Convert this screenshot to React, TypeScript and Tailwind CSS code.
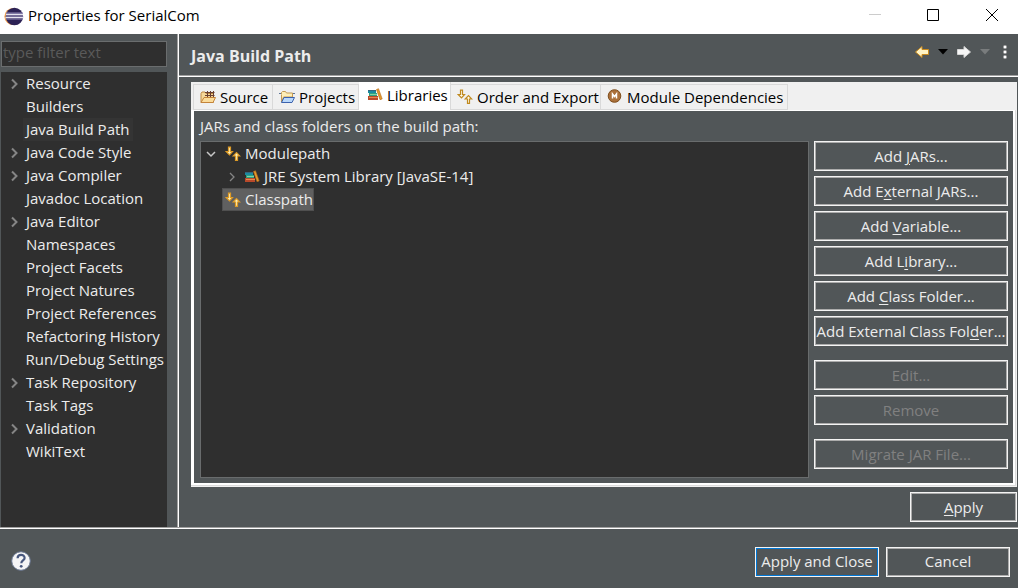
import { useState } from "react";
import type { ReactNode } from "react";
import clsx from "clsx";

interface NavItem {
  label: string;
  expandable?: boolean;
}

const NAV_ITEMS: NavItem[] = [
  { label: "Resource", expandable: true },
  { label: "Builders" },
  { label: "Java Build Path" },
  { label: "Java Code Style", expandable: true },
  { label: "Java Compiler", expandable: true },
  { label: "Javadoc Location" },
  { label: "Java Editor", expandable: true },
  { label: "Namespaces" },
  { label: "Project Facets" },
  { label: "Project Natures" },
  { label: "Project References" },
  { label: "Refactoring History" },
  { label: "Run/Debug Settings" },
  { label: "Task Repository", expandable: true },
  { label: "Task Tags" },
  { label: "Validation", expandable: true },
  { label: "WikiText" },
];

function EclipseLogo() {
  return (
    <svg width="20" height="20" viewBox="0 0 20 20" aria-hidden="true">
      <circle cx="9" cy="9.500" r="8.600" fill="#f0a050" />
      <circle cx="10.400" cy="9.500" r="8.700" fill="#2c2255" />
      <path d="M2 7.500h17M1.500 10.500h18" stroke="#e4e2ee" strokeWidth="1.300" />
      <path d="M2 6.200h17M2 9h17M2 12h17" stroke="#8f88b5" strokeWidth="1.200" />
    </svg>
  );
}

function SourceIcon() {
  return (
    <svg width="16" height="16" viewBox="0 0 16 16" aria-hidden="true">
      <path d="M1 13.500V4.500l1-1.500h3l1 1.500h7.500v9z" fill="#f6d89a" stroke="#c08a44" />
      <path d="M5 3.500h9.500M5 6.500h9.500M7.500 2v6.500M10.500 2v6.500M13.500 2v6.500" fill="none" stroke="#6b4031" />
      <path d="M1 13.500l3-5h11.500l-2.500 5z" fill="#fbdc9b" stroke="#c4843a" />
    </svg>
  );
}

function ProjectsIcon() {
  return (
    <svg width="16" height="16" viewBox="0 0 16 16" aria-hidden="true">
      <path d="M2.500 13V5.500M2.500 5V3.500L3.500 2.500h3l1 1.500h6v4h-9l-2 5" fill="#fdeeb8" stroke="#c39a55" />
      <path d="M0 4.500h2M14 4.500h2" stroke="#5c7599" />
      <path d="M2.500 13.500L5 8.500h10.500L13 13.500z" fill="#b9d8fb" stroke="#3c62ad" />
    </svg>
  );
}

function LibraryIcon() {
  return (
    <svg width="16" height="16" viewBox="0 0 16 16" aria-hidden="true">
      <path d="M1 3h8v3H1z" fill="#1b8aa0" />
      <path d="M1 3h8v1H1z" fill="#35657f" />
      <path d="M2 6h8v3H2z" fill="#2fa27f" />
      <path d="M3 7h7v1H3z" fill="#84d1a8" />
      <path d="M1 9h10v4H1z" fill="#b8492a" />
      <path d="M2 10.500h9" stroke="#e8884e" />
      <path d="M9.500 2.500l2-.8 3.700 10.200-2.200.8z" fill="#e39b2b" stroke="#b4661b" strokeWidth=".6" />
    </svg>
  );
}

function ArrowsIcon({ outline = false }: { outline?: boolean }) {
  return (
    <svg width="16" height="16" viewBox="0 0 16 16" aria-hidden="true">
      <g
        fill={outline ? "#fffbe9" : "#fff0b8"}
        stroke={outline ? "#c08a20" : "#dc9a26"}
        strokeWidth="1.200"
      >
        <path d="M3.500 1.200h2v4.300h2L4.500 8.800 1.200 5.500h2.300z" />
        <path d="M10.500 14.300h2v-4.300h2.300L11.500 6.500 8.200 10h2.300z" />
      </g>
    </svg>
  );
}

function ModuleIcon() {
  return (
    <svg width="16" height="16" viewBox="0 0 16 16" aria-hidden="true">
      <circle cx="7.500" cy="7" r="6.300" fill="#ab713b" stroke="#80501f" />
      <path d="M5.500 9.500V5l2 2.500 2-2.500v4.500" fill="none" stroke="#fff" strokeWidth="1.500" />
    </svg>
  );
}

function Chevron({ open = false, thin = false }: { open?: boolean; thin?: boolean }) {
  return (
    <svg width="12" height="12" viewBox="0 0 12 12" fill="none" aria-hidden="true">
      {open ? (
        <path d="M2 4l4 4 4-4" stroke="#c8c8c8" strokeWidth="1.500" />
      ) : (
        <path d={thin ? "M4 2l4 4-4 4" : "M4 1.500L8.500 6 4 10.500"} stroke="#858585" strokeWidth={thin ? 1.3 : 2} />
      )}
    </svg>
  );
}

function PageArrow({ forward = false }: { forward?: boolean }) {
  return (
    <svg width="16" height="16" viewBox="0 0 16 16" aria-hidden="true">
      {forward ? (
        <path d="M1.500 5.500h6.500V2.500L14.500 8 8 13.500v-3H1.500z" fill="#f6f6f6" stroke="#d5d5d5" />
      ) : (
        <path d="M14.500 5.500H8V2.500L1.500 8 8 13.500v-3h6.500z" fill="#fff3c4" stroke="#c98a1c" />
      )}
    </svg>
  );
}

function Caret({ disabled = false }: { disabled?: boolean }) {
  return (
    <svg width="10" height="6" viewBox="0 0 10 6" aria-hidden="true">
      <path d="M0 0h10L5 5.500z" fill={disabled ? "#797c7d" : "#000"} />
    </svg>
  );
}

// Label with its keyboard mnemonic, marked by "&" before the letter
function Mnemonic({ text }: { text: string }) {
  const at = text.indexOf("&");
  if (at < 0) return <>{text}</>;
  return (
    <>
      {text.slice(0, at)}
      <span className="underline underline-offset-2">{text[at + 1]}</span>
      {text.slice(at + 2)}
    </>
  );
}

function PushButton({
  text,
  disabled,
  primary,
  className,
}: {
  text: string;
  disabled?: boolean;
  primary?: boolean;
  className?: string;
}) {
  return (
    <button
      type="button"
      disabled={disabled}
      className={clsx(
        "h-[30px] border border-[#f4f4f4] outline -outline-offset-2 whitespace-nowrap",
        primary ? "outline-[#0078d7]" : "outline-[#acacac]",
        disabled ? "text-[#808080]" : "text-[#ececec]",
        className,
      )}
    >
      <Mnemonic text={text} />
    </button>
  );
}

const TABS: { label: string; icon: ReactNode; width: string }[] = [
  { label: "Source", icon: <SourceIcon />, width: "w-[80px]" },
  { label: "Projects", icon: <ProjectsIcon />, width: "w-[86px]" },
  { label: "Libraries", icon: <LibraryIcon />, width: "w-[92px]" },
  { label: "Order and Export", icon: <ArrowsIcon outline />, width: "w-[150px]" },
  { label: "Module Dependencies", icon: <ModuleIcon />, width: "w-[187px]" },
];

export default function App() {
  const [page, setPage] = useState("Java Build Path");
  const [tab, setTab] = useState("Libraries");
  const [filter, setFilter] = useState("");

  return (
    <div className="flex min-h-screen flex-col bg-[#515658] font-['Open_Sans','Noto_Sans',sans-serif] text-[15px] leading-[23px] text-[#ececec]">
      {/* Title bar */}
      <header className="flex h-[34px] items-center bg-white pl-1 text-black">
        <EclipseLogo />
        <h1 className="ml-1 pb-1">Properties for SerialCom</h1>
        <div className="ml-auto flex pb-1">
          <button type="button" aria-label="Minimize" disabled className="flex w-[58px] justify-center">
            <svg width="12" height="12" viewBox="0 0 12 12">
              <path d="M0 5.500h12" stroke="#cccccc" />
            </svg>
          </button>
          <button type="button" aria-label="Maximize" className="flex w-[58px] justify-center">
            <svg width="12" height="12" viewBox="0 0 12 12">
              <path d="M.5.500h11v11H.500z" fill="none" stroke="#000" />
            </svg>
          </button>
          <button type="button" aria-label="Close" className="flex w-[56px] justify-center pl-1">
            <svg width="12" height="12" viewBox="0 0 12 12">
              <path d="M0 0l12 12M12 0L0 12" stroke="#000" />
            </svg>
          </button>
        </div>
      </header>

      <div className="flex flex-1">
        {/* Page list */}
        <aside className="flex w-[178px] shrink-0 flex-col border-r border-[#a0a0a0] pt-[7px] pr-2.5 pl-px">
          <input
            type="text"
            aria-label="Filter"
            placeholder="type filter text"
            value={filter}
            onChange={(e) => setFilter(e.target.value)}
            className="h-[26px] w-full border border-[#6a6d6e] bg-[#2f2f2f] px-px pb-1 placeholder:text-[#5a5a5a]"
          />
          <ul className="mt-[5px] flex-1 bg-[#2f2f2f]">
            {NAV_ITEMS.filter((i) => i.label.toLowerCase().includes(filter.toLowerCase())).map((item) => (
              <li key={item.label} className="flex h-[23px] items-center">
                <span className="flex w-[22px] justify-center pl-1">{item.expandable && <Chevron />}</span>
                <button
                  type="button"
                  onClick={() => setPage(item.label)}
                  className={clsx("px-[3px] whitespace-nowrap", page === item.label && "bg-[#343434]")}
                >
                  {item.label}
                </button>
              </li>
            ))}
          </ul>
        </aside>

        <main className="flex min-w-0 flex-1 flex-col border-l border-white">
          <div className="flex h-[42px] items-center border-b border-[#a0a0a0] pr-2.5 pl-3">
            <h2 className="pt-0.5 text-base font-bold">{page}</h2>
            <div className="ml-auto flex items-center pb-1.5">
              <button type="button" aria-label="Back">
                <PageArrow />
              </button>
              <button type="button" aria-label="Back history" className="ml-2">
                <Caret />
              </button>
              <button type="button" aria-label="Forward" className="ml-2">
                <PageArrow forward />
              </button>
              <button type="button" aria-label="Forward history" disabled className="ml-2">
                <Caret disabled />
              </button>
              <button type="button" aria-label="View menu" className="ml-3">
                <svg width="6" height="16" viewBox="0 0 6 16">
                  <path d="M1 1h4v4H1zM1 6h4v4H1zM1 11h4v4H1z" fill="#3c3f40" />
                  <path d="M1.500 1.500h3v3h-3zM1.500 6.500h3v3h-3zM1.500 11.500h3v3h-3z" fill="#fff" />
                </svg>
              </button>
            </div>
          </div>
          <div className="h-px bg-white" />

          {/* Tab folder */}
          <section className="mt-[5px] mr-px ml-3 flex flex-1 flex-col bg-[#f0f0f0]">
            <div role="tablist" className="flex h-7 items-end pl-0.5">
              {TABS.map((t) => (
                <button
                  key={t.label}
                  type="button"
                  role="tab"
                  aria-selected={tab === t.label}
                  onClick={() => setTab(t.label)}
                  className={clsx(
                    "flex items-center gap-1 border-r border-[#d9d9d9] whitespace-nowrap text-black first:border-l",
                    t.width,
                    tab === t.label ? "h-7 bg-white pb-0.5 pl-2" : "h-[26px] border-y pl-1.5",
                  )}
                >
                  {t.icon}
                  {t.label}
                </button>
              ))}
            </div>
            <div role="tabpanel" className="flex flex-1 border-r border-b border-[#f0f0f0]">
              <div className="flex flex-1 border-r border-b border-[#dcdcdc]">
                <div className="flex flex-1 flex-col border-t border-r-2 border-b-2 border-l-[3px] border-white bg-[#515658] pr-[5px] pb-[5px] pl-1.5">
                  <p className="h-[30px] pt-1">JARs and class folders on the build path:</p>
                  <div className="flex flex-1 gap-[5px]">
                    <ul className="flex-1 border border-[#696c6d] bg-[#2f2f2f]">
                      <li>
                        <div className="flex h-[23px] items-center pl-1">
                          <Chevron open />
                          <button type="button" className="ml-2 flex items-center gap-1">
                            <ArrowsIcon />
                            Modulepath
                          </button>
                        </div>
                        <ul>
                          <li className="flex h-[23px] items-center pl-[25px]">
                            <Chevron thin />
                            <button type="button" className="ml-1.5 flex items-center gap-1">
                              <LibraryIcon />
                              JRE System Library [JavaSE-14]
                            </button>
                          </li>
                        </ul>
                      </li>
                      <li className="pl-[21px]">
                        <button
                          type="button"
                          className="flex h-[23px] items-center gap-1 border border-[#505050] bg-[#606060] pl-0.5"
                        >
                          <ArrowsIcon />
                          Classpath
                        </button>
                      </li>
                    </ul>
                    <div className="flex w-[194px] flex-col gap-[5px]">
                      <PushButton text="Add &JARs..." />
                      <PushButton text="Add E&xternal JARs..." />
                      <PushButton text="Add &Variable..." />
                      <PushButton text="Add L&ibrary..." />
                      <PushButton text="Add &Class Folder..." />
                      <PushButton text="Add External Class Fol&der..." />
                      <PushButton text="Edit..." disabled className="mt-[9px]" />
                      <PushButton text="Remove" disabled />
                      <PushButton text="Migrate JAR File..." disabled className="mt-[9px]" />
                    </div>
                  </div>
                </div>
              </div>
            </div>
          </section>
          <div className="flex justify-end pt-[5px] pr-px pb-[5px]">
            <PushButton text="&Apply" className="w-[107px]" />
          </div>
        </main>
      </div>

      <footer className="flex h-[61px] flex-col border-t border-[#a0a0a0]">
        <div className="h-px bg-white" />
        <div className="flex flex-1 items-center pt-1.5 pr-2 pl-2.5">
          <button type="button" aria-label="Help" className="pb-0.5">
            <svg width="22" height="22" viewBox="0 0 22 22">
              <circle cx="11" cy="11" r="9.300" fill="#f4f4f6" stroke="#66748f" />
              <path
                d="M7.600 8.200c0-4.500 7-4.300 7-.3 0 2.500-3.300 2.600-3.300 5.300"
                fill="none"
                stroke="#48587f"
                strokeWidth="2.200"
              />
              <circle cx="11.200" cy="16.300" r="1.400" fill="#48587f" />
            </svg>
          </button>
          <div className="ml-auto flex gap-[7px]">
            <PushButton text="Apply and Close" primary className="w-[124px]" />
            <PushButton text="Cancel" className="w-[124px]" />
          </div>
        </div>
      </footer>
    </div>
  );
}
